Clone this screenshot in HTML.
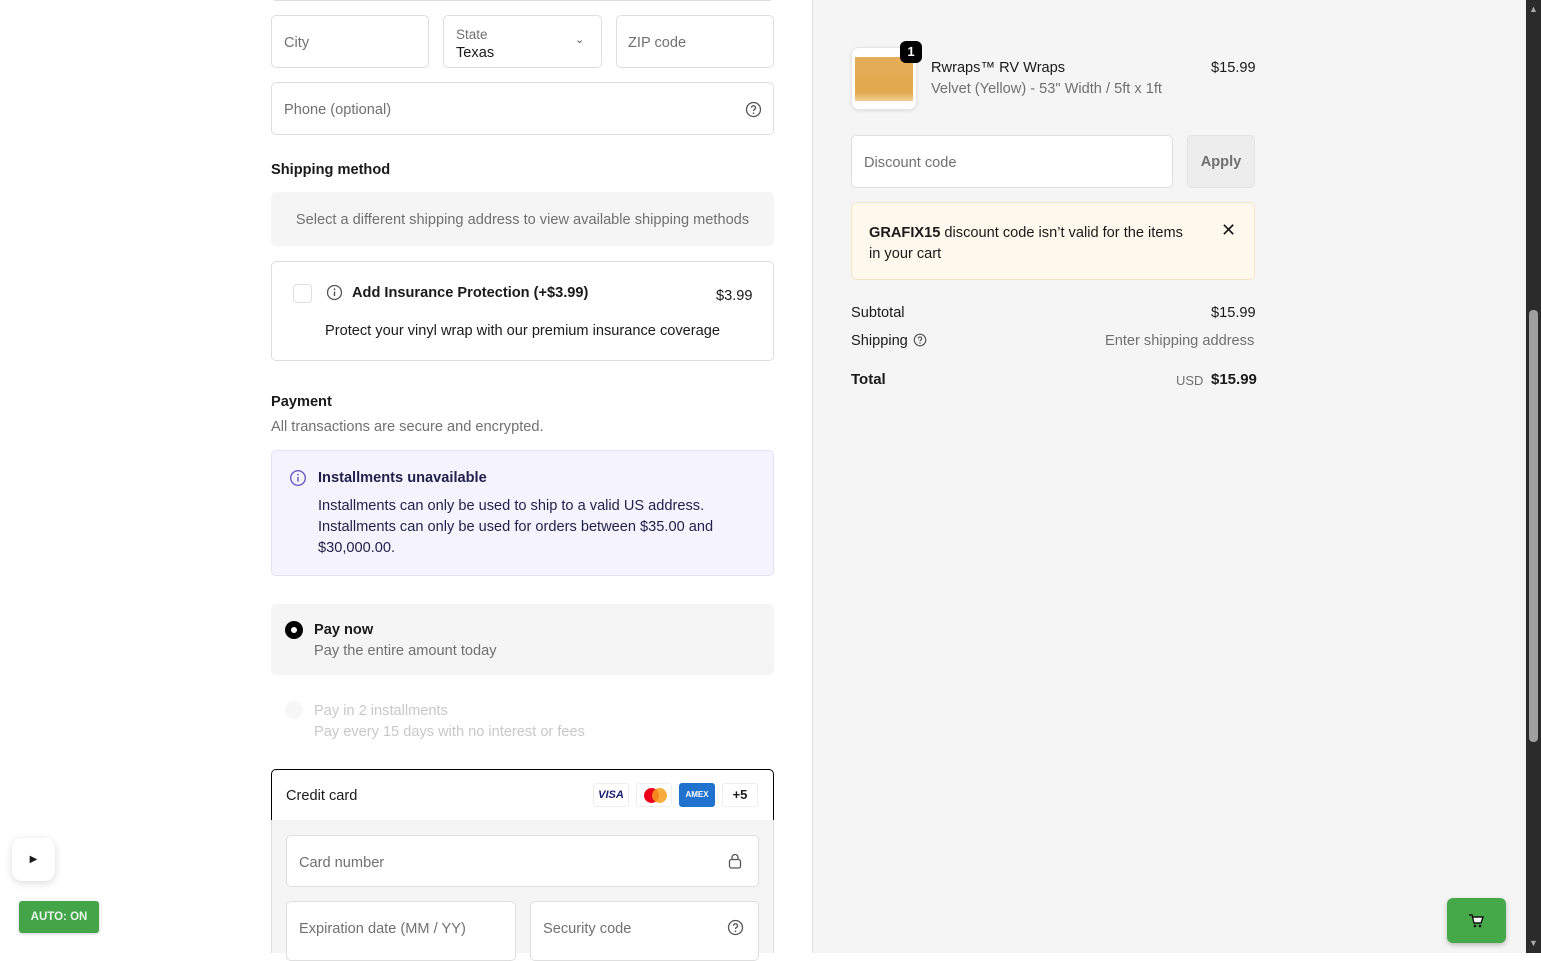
<!DOCTYPE html>
<html><head><meta charset="utf-8"><style>
*{box-sizing:border-box;margin:0;padding:0}
body{width:1541px;height:953px;overflow:hidden;background:#fff;font-family:"Liberation Sans",Arial,sans-serif;font-size:14.6px;color:#1a1a1a;position:relative}
.a{position:absolute}
span.a,div.t{margin-top:2px}
.in{position:absolute;border:1px solid #dedede;border-radius:5px;background:#fff}
.ph{color:#707070}
.b{font-weight:bold}
</style></head><body>
<div class="a" style="left:812px;top:0;width:714px;height:953px;background:#f5f5f5;border-left:1px solid #e1e1e1"></div>
<div class="a" style="left:1526px;top:0;width:15px;height:953px;background:#2b2b2b"></div>
<div class="a" style="left:1529px;top:310px;width:9px;height:432px;background:#9f9f9f;border-radius:4px"></div>
<div class="a" style="left:1529px;top:4px;color:#aaa;font-size:9px">▲</div>
<div class="a" style="left:1529px;top:938px;color:#aaa;font-size:9px">▼</div>

<div class="in" style="left:271px;top:-10px;width:503px;height:11px"></div>
<div class="in" style="left:271px;top:15px;width:158px;height:53px"><span class="a ph" style="left:12px;top:17px">City</span></div>
<div class="in" style="left:443px;top:15px;width:159px;height:53px"><span class="a ph" style="left:12px;top:9px;font-size:13.5px">State</span><span class="a" style="left:12px;top:27px">Texas</span><span class="a" style="left:131px;top:15px;font-size:11px;color:#555">&#8964;</span></div>
<div class="in" style="left:616px;top:15px;width:158px;height:53px"><span class="a ph" style="left:11px;top:17px">ZIP code</span></div>
<div class="in" style="left:271px;top:82px;width:503px;height:53px"><span class="a ph" style="left:12px;top:17px">Phone (optional)</span>
<svg class="a" style="left:473px;top:18px" width="17" height="17" viewBox="0 0 17 17"><circle cx="8.5" cy="8.5" r="7" fill="none" stroke="#555" stroke-width="1.3"/><path d="M6.5 6.8a2 2 0 1 1 2.8 1.8c-.6.3-.8.7-.8 1.4" fill="none" stroke="#555" stroke-width="1.3"/><circle cx="8.5" cy="12.2" r=".8" fill="#555"/></svg></div>

<div class="a b t" style="left:271px;top:160px">Shipping method</div>
<div class="a" style="left:271px;top:192px;width:503px;height:54px;background:#f5f5f5;border-radius:5px;color:#707070;text-align:center;line-height:56px">Select a different shipping address to view available shipping methods</div>

<div class="in" style="left:271px;top:261px;width:503px;height:100px">
<div class="a" style="left:21px;top:22px;width:19px;height:19px;border:1px solid #dedede;border-radius:4px"></div>
<svg class="a" style="left:54px;top:22px" width="17" height="17" viewBox="0 0 17 17"><circle cx="8.5" cy="8.5" r="7" fill="none" stroke="#555" stroke-width="1.3"/><path d="M8.5 7.5v4.5" stroke="#555" stroke-width="1.4"/><circle cx="8.5" cy="5.2" r=".9" fill="#555"/></svg>
<span class="a b" style="left:80px;top:21px">Add Insurance Protection (+$3.99)</span>
<span class="a" style="left:444px;top:24px">$3.99</span>
<span class="a" style="left:53px;top:59px">Protect your vinyl wrap with our premium insurance coverage</span>
</div>

<div class="a b t" style="left:271px;top:392px">Payment</div>
<div class="a t" style="left:271px;top:417px;color:#707070">All transactions are secure and encrypted.</div>

<div class="a" style="left:271px;top:450px;width:503px;height:126px;background:#f4f3fe;border:1px solid #e3e1f5;border-radius:5px;color:#221f4a">
<svg class="a" style="left:17px;top:18px" width="18" height="18" viewBox="0 0 18 18"><circle cx="9" cy="9" r="7.3" fill="none" stroke="#6a5bc9" stroke-width="1.4"/><path d="M9 8v4.5" stroke="#6a5bc9" stroke-width="1.5"/><circle cx="9" cy="5.6" r=".9" fill="#6a5bc9"/></svg>
<span class="a b" style="left:46px;top:17px">Installments unavailable</span>
<div class="a" style="left:46px;top:45px;line-height:21px;width:440px">Installments can only be used to ship to a valid US address. Installments can only be used for orders between $35.00 and $30,000.00.</div>
</div>

<div class="a" style="left:271px;top:604px;width:503px;height:71px;background:#f5f5f5;border-radius:5px">
<div class="a" style="left:14px;top:17px;width:18px;height:18px;border-radius:50%;background:#000"><div class="a" style="left:6px;top:6px;width:6px;height:6px;border-radius:50%;background:#fff"></div></div>
<span class="a b" style="left:43px;top:16px">Pay now</span>
<span class="a" style="left:43px;top:37px;color:#707070">Pay the entire amount today</span>
</div>
<div class="a" style="left:285px;top:701px;width:18px;height:18px;border-radius:50%;background:#f7f7f7"></div>
<span class="a" style="left:314px;top:701px;color:#c8c8c8">Pay in 2 installments</span>
<span class="a" style="left:314px;top:722px;color:#c8c8c8">Pay every 15 days with no interest or fees</span>

<div class="a" style="left:271px;top:769px;width:503px;height:52px;border:1px solid #000;border-radius:5px 5px 0 0;background:#fff">
<span class="a" style="left:14px;top:16px">Credit card</span>
<div class="a" style="left:321px;top:13px;width:36px;height:24px;border:1px solid #eee;border-radius:3px;font:italic bold 11px 'Liberation Sans';color:#1a1f71;text-align:center;line-height:22px">VISA</div>
<div class="a" style="left:364px;top:13px;width:36px;height:24px;border:1px solid #eee;border-radius:3px"><div class="a" style="left:7px;top:4px;width:15px;height:15px;border-radius:50%;background:#eb001b"></div><div class="a" style="left:15px;top:4px;width:15px;height:15px;border-radius:50%;background:#f79e1b;opacity:.85"></div></div>
<div class="a" style="left:407px;top:13px;width:36px;height:24px;border-radius:3px;background:#1f72cd;color:#fff;font:bold 8px 'Liberation Sans';text-align:center;line-height:24px">AMEX</div>
<div class="a b" style="left:450px;top:13px;width:36px;height:24px;border:1px solid #eee;border-radius:3px;text-align:center;line-height:22px;font-size:13px">+5</div>
</div>
<div class="a" style="left:271px;top:820px;width:503px;height:133px;background:#f5f5f5;border:1px solid #dedede;border-top:none;border-bottom:none"></div>
<div class="in" style="left:286px;top:835px;width:473px;height:52px"><span class="a ph" style="left:12px;top:17px">Card number</span>
<svg class="a" style="left:440px;top:16px" width="16" height="18" viewBox="0 0 16 18"><rect x="2.5" y="7.5" width="11" height="8.5" rx="2" fill="none" stroke="#555" stroke-width="1.3"/><path d="M5 7.5V5.5a3 3 0 0 1 6 0v2" fill="none" stroke="#555" stroke-width="1.3"/></svg></div>
<div class="in" style="left:286px;top:901px;width:230px;height:60px"><span class="a ph" style="left:12px;top:17px">Expiration date (MM / YY)</span></div>
<div class="in" style="left:530px;top:901px;width:229px;height:60px"><span class="a ph" style="left:12px;top:17px">Security code</span>
<svg class="a" style="left:196px;top:17px" width="17" height="17" viewBox="0 0 17 17"><circle cx="8.5" cy="8.5" r="7" fill="none" stroke="#555" stroke-width="1.3"/><path d="M6.5 6.8a2 2 0 1 1 2.8 1.8c-.6.3-.8.7-.8 1.4" fill="none" stroke="#555" stroke-width="1.3"/><circle cx="8.5" cy="12.2" r=".8" fill="#555"/></svg></div>

<!-- right -->
<div class="a" style="left:851px;top:47px;width:66px;height:63px;border-radius:8px;background:#fff;border:1px solid #e6e6e6;box-shadow:0 1px 3px rgba(0,0,0,.1)"><div class="a" style="left:3px;top:9px;width:58px;height:44px;background:linear-gradient(#e6ad58,#e2a94f 80%,#efcf90)"></div></div>
<div class="a" style="left:900px;top:41px;width:22px;height:22px;border-radius:6px;background:#000;color:#fff;font-weight:bold;font-size:13px;text-align:center;line-height:22px">1</div>
<span class="a" style="left:931px;top:58px">Rwraps™ RV Wraps</span>
<span class="a" style="left:931px;top:79px;color:#707070">Velvet (Yellow) - 53" Width / 5ft x 1ft</span>
<span class="a" style="left:1211px;top:58px">$15.99</span>
<div class="in" style="left:851px;top:135px;width:322px;height:53px"><span class="a ph" style="left:12px;top:17px">Discount code</span></div>
<div class="a b" style="left:1187px;top:135px;width:68px;height:53px;border:1px solid #e3e3e3;border-radius:5px;background:#ededed;color:#707070;text-align:center;line-height:53px">Apply</div>
<div class="a" style="left:851px;top:202px;width:404px;height:78px;background:#fff8ed;border:1px solid #f4e4c8;border-radius:5px">
<div class="a t" style="left:17px;top:18px;line-height:21px;width:318px"><b>GRAFIX15</b> discount code isn’t valid for the items in your cart</div>
<span class="a" style="left:369px;top:15px;font-size:18px">✕</span></div>
<span class="a" style="left:851px;top:303px">Subtotal</span><span class="a" style="left:1211px;top:303px">$15.99</span>
<span class="a" style="left:851px;top:331px">Shipping</span>
<svg class="a" style="left:913px;top:333px" width="14" height="14" viewBox="0 0 17 17"><circle cx="8.5" cy="8.5" r="7" fill="none" stroke="#555" stroke-width="1.4"/><path d="M6.5 6.8a2 2 0 1 1 2.8 1.8c-.6.3-.8.7-.8 1.4" fill="none" stroke="#555" stroke-width="1.4"/><circle cx="8.5" cy="12.2" r=".9" fill="#555"/></svg>
<span class="a" style="left:1105px;top:331px;color:#707070">Enter shipping address</span>
<span class="a b" style="left:851px;top:369px;font-size:15px">Total</span>
<span class="a" style="left:1176px;top:370px;color:#707070;font-size:13px;line-height:18px">USD</span><span class="a b" style="left:1211px;top:369px;font-size:15px">$15.99</span>

<!-- floating -->
<div class="a" style="left:12px;top:838px;width:43px;height:43px;border-radius:10px;background:#fff;box-shadow:0 2px 8px rgba(0,0,0,.15);text-align:center;line-height:43px;font-size:10px">▶</div>
<div class="a" style="left:19px;top:901px;width:80px;height:32px;border-radius:3px;background:#43a547;color:#e9f6e9;font-weight:bold;font-size:11.5px;text-align:center;line-height:32px;box-shadow:0 1px 3px rgba(0,0,0,.2)">AUTO: ON</div>
<div class="a" style="left:1447px;top:898px;width:59px;height:45px;border-radius:6px;background:#45a94a;box-shadow:0 2px 5px rgba(0,0,0,.25)">
<svg class="a" style="left:21px;top:15px" width="17" height="15" viewBox="0 0 17 15"><path d="M1 2h3l2 8h7l2-6H5" fill="#fff" stroke="#111" stroke-width="1.4"/><circle cx="7" cy="13" r="1.3" fill="#111"/><circle cx="12" cy="13" r="1.3" fill="#111"/></svg></div>
</body></html>
